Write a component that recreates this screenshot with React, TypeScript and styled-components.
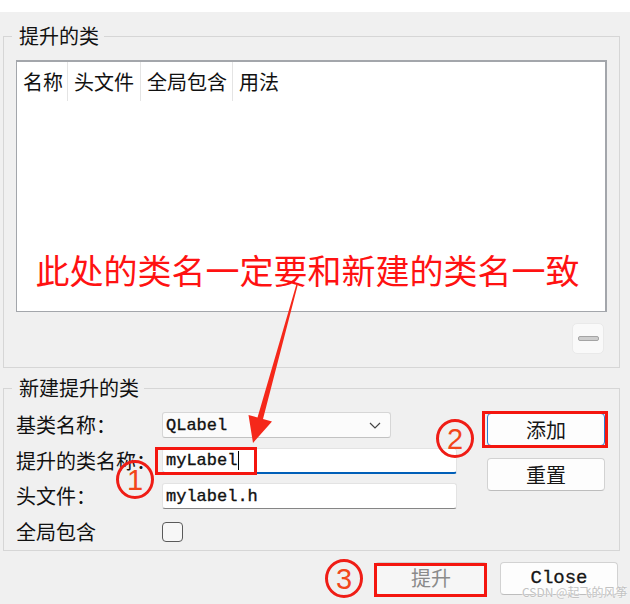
import React from 'react';
import styled, { createGlobalStyle } from 'styled-components';

const GlobalStyle = createGlobalStyle`
  html, body { margin: 0; padding: 0; background: #f0f0f0; }
  body { font-family: "Noto Sans CJK SC", "Noto Sans", sans-serif; }
`;

const Dialog = styled.div`
  position: relative;
  width: 630px;
  height: 604px;
  overflow: hidden;
  background: #f0f0f0;
  font-family: "Noto Sans CJK SC", "Noto Sans", sans-serif;
  font-size: 20px;
  color: #111;
`;

const TopStrip = styled.div`
  height: 12px;
  background: #ffffff;
`;

const Group = styled.fieldset<{ $mt: number; $pb: number }>`
  box-sizing: border-box;
  width: 617px;
  min-width: 0;
  margin: ${(p) => p.$mt}px 0 0 3px;
  padding: 14px 12px ${(p) => p.$pb}px 12px;
  border: 1px solid #d6d6d6;
`;

const GroupTitle = styled.legend`
  margin-left: -4px;
  padding: 0 5px 0 7px;
  height: 20px;
  font-size: 20px;
  line-height: 20px;
  white-space: nowrap;
`;

const ClassList = styled.div`
  box-sizing: border-box;
  height: 252px;
  border: 2px solid #a3a6ab;
  border-width: 2px 2px 1px 1px;
  background: #ffffff;
  display: flex;
  flex-direction: column;
`;

const HeaderRow = styled.div`
  display: flex;
  height: 39px;
`;

const HeaderCell = styled.div<{ $w?: number }>`
  box-sizing: border-box;
  ${(p) => (p.$w ? `width: ${p.$w}px; border-right: 1px solid #e4e4e4;` : 'flex: 1;')}
  padding-left: 6px;
  display: flex;
  align-items: center;
  line-height: 20px;
  white-space: nowrap;
`;

const ListBody = styled.div`
  flex: 1;
  display: flex;
  align-items: flex-end;
  justify-content: center;
  padding: 0 7px 21px 0;
`;

const Annotation = styled.div`
  color: #ff1212;
  font-size: 34px;
  line-height: 40px;
  white-space: nowrap;
`;

const ToolRow = styled.div`
  display: flex;
  justify-content: flex-end;
  margin-top: 11px;
  padding-right: 3px;
`;

const MinusButton = styled.div`
  box-sizing: border-box;
  width: 32px;
  height: 31px;
  border: 1px solid #e9e9e9;
  border-radius: 5px;
  background: #f9f9f9;
  display: flex;
  align-items: center;
  justify-content: center;
`;

const MinusBar = styled.span`
  box-sizing: border-box;
  width: 21px;
  height: 5px;
  border: 1px solid #a4a4a4;
  border-radius: 2px;
  background: #cdcdcd;
`;

const FormGrid = styled.div`
  display: grid;
  grid-template-columns: 146px 325px 118px;
  grid-template-rows: repeat(4, 26px);
  row-gap: 9.5px;
`;

const FieldLabel = styled.div<{ $row: number }>`
  grid-column: 1;
  grid-row: ${(p) => p.$row};
  display: flex;
  align-items: center;
  white-space: nowrap;
  line-height: 20px;
`;

const FieldCell = styled.div<{ $row: number }>`
  grid-column: 2;
  grid-row: ${(p) => p.$row};
  display: flex;
  align-items: center;
`;

const MonoText = styled.span`
  font-family: "Liberation Mono", "DejaVu Sans Mono", monospace;
  font-size: 17px;
  color: #111;
  white-space: nowrap;
  -webkit-text-stroke: 0.35px #111;
`;

const ComboBox = styled.div`
  box-sizing: border-box;
  width: 229px;
  height: 26px;
  border: 1px solid #d6d6d6;
  border-bottom-color: #c2c2c2;
  border-radius: 3px;
  background: #fbfbfb;
  display: flex;
  align-items: center;
  justify-content: space-between;
  padding: 0 9px 0 3px;
`;

const LineEdit = styled.div<{ $focused?: boolean }>`
  position: relative;
  box-sizing: border-box;
  width: 295px;
  height: 26px;
  border: 1px solid #e3e3e3;
  border-bottom: ${(p) => (p.$focused ? '2px solid #005fb8' : '1px solid #858585')};
  border-radius: 3px;
  background: #ffffff;
  display: flex;
  align-items: center;
  padding-left: 3px;
`;

const Caret = styled.span`
  display: inline-block;
  width: 1px;
  height: 19px;
  margin-left: 1px;
  background: #000;
`;

const Highlight = styled.span<{ $l: number; $t: number; $r: number; $b: number }>`
  position: absolute;
  left: ${(p) => p.$l}px;
  top: ${(p) => p.$t}px;
  right: ${(p) => p.$r}px;
  bottom: ${(p) => p.$b}px;
  box-sizing: border-box;
  border: 3px solid #f4160f;
  pointer-events: none;
`;

const CheckBox = styled.span`
  box-sizing: border-box;
  width: 21px;
  height: 20px;
  border: 1px solid #5a5a5a;
  border-radius: 4px;
  background: #f7f7f7;
`;

const ButtonColumn = styled.div`
  grid-column: 3;
  grid-row: 1 / span 4;
  display: flex;
  flex-direction: column;
  gap: 12px;
  padding-top: 1px;
`;

const PushButton = styled.button<{ $w: number; $focus?: boolean; $off?: boolean; $mono?: boolean }>`
  position: relative;
  box-sizing: border-box;
  width: ${(p) => p.$w}px;
  height: 33px;
  padding: 0;
  border: 1px solid ${(p) => (p.$focus ? '#2a7bd0' : '#d2d2d2')};
  border-bottom-color: ${(p) => (p.$focus ? '#2a7bd0' : '#bdbdbd')};
  border-radius: 4px;
  background: ${(p) => (p.$off ? '#f6f6f6' : '#fdfdfd')};
  color: ${(p) => (p.$off ? '#8a8a8a' : '#161616')};
  font-family: ${(p) =>
    p.$mono ? '"Liberation Mono", monospace' : '"Noto Sans CJK SC", "Noto Sans", sans-serif'};
  font-size: ${(p) => (p.$mono ? 19 : 20)}px;
  line-height: 20px;
  ${(p) => (p.$mono ? '-webkit-text-stroke: 0.3px #161616;' : '')}
`;

const BottomRow = styled.div`
  display: flex;
  justify-content: flex-end;
  gap: 13px;
  margin-top: 11px;
  padding-right: 12px;
`;

const CircleMark = styled.span<{ $x: number; $y: number }>`
  position: absolute;
  left: ${(p) => p.$x}px;
  top: ${(p) => p.$y}px;
  box-sizing: border-box;
  width: 38px;
  height: 39px;
  border: 3px solid #ef1d16;
  border-radius: 50%;
  display: flex;
  align-items: center;
  justify-content: center;
  font-family: "Liberation Sans", sans-serif;
  font-size: 29px;
  line-height: 30px;
  color: #f2461a;
  pointer-events: none;
`;

const ArrowLayer = styled.svg`
  position: absolute;
  left: 0;
  top: 0;
  pointer-events: none;
`;

const Watermark = styled.span`
  position: absolute;
  left: 522px;
  top: 584px;
  font-size: 12px;
  line-height: 15px;
  color: #c2c2c2;
  text-shadow: 0 0 2px #fff, 0 0 1px #fff;
  white-space: nowrap;
  pointer-events: none;
`;

export default function App() {
  return (
    <Dialog>
      <GlobalStyle />
      <TopStrip />
      <Group $mt={14} $pb={13}>
        <GroupTitle>提升的类</GroupTitle>
        <ClassList>
          <HeaderRow>
            <HeaderCell $w={51}>名称</HeaderCell>
            <HeaderCell $w={73}>头文件</HeaderCell>
            <HeaderCell $w={92}>全局包含</HeaderCell>
            <HeaderCell>用法</HeaderCell>
          </HeaderRow>
          <ListBody>
            <Annotation>此处的类名一定要和新建的类名一致</Annotation>
          </ListBody>
        </ClassList>
        <ToolRow>
          <MinusButton>
            <MinusBar />
          </MinusButton>
        </ToolRow>
      </Group>

      <Group $mt={10} $pb={5}>
        <GroupTitle>新建提升的类</GroupTitle>
        <FormGrid>
          <FieldLabel $row={1}>基类名称：</FieldLabel>
          <FieldCell $row={1}>
            <ComboBox>
              <MonoText>QLabel</MonoText>
              <svg width="12" height="7" viewBox="0 0 12 7">
                <polyline points="1,1 6,6 11,1" fill="none" stroke="#444" strokeWidth="1.2" />
              </svg>
            </ComboBox>
          </FieldCell>
          <FieldLabel $row={2}>提升的类名称：</FieldLabel>
          <FieldCell $row={2}>
            <LineEdit $focused>
              <MonoText>myLabel</MonoText>
              <Caret />
              <Highlight $l={-8} $t={-2} $r={199} $b={-3} />
            </LineEdit>
          </FieldCell>
          <FieldLabel $row={3}>头文件：</FieldLabel>
          <FieldCell $row={3}>
            <LineEdit>
              <MonoText>mylabel.h</MonoText>
            </LineEdit>
          </FieldCell>
          <FieldLabel $row={4}>全局包含</FieldLabel>
          <FieldCell $row={4}>
            <CheckBox />
          </FieldCell>
          <ButtonColumn>
            <PushButton $w={118} $focus>
              添加
              <Highlight $l={-6} $t={-3} $r={-4} $b={-3} />
            </PushButton>
            <PushButton $w={118}>重置</PushButton>
          </ButtonColumn>
        </FormGrid>
      </Group>

      <BottomRow>
        <PushButton $w={112} $off>
          提升
          <Highlight $l={-2} $t={0} $r={-1} $b={-3} />
        </PushButton>
        <PushButton $w={118} $mono>Close</PushButton>
      </BottomRow>

      <ArrowLayer width="630" height="604" viewBox="0 0 630 604">
        <polygon
          points="296.5,284 298,284 263,419 272,421.5 253,443 248.5,415 257.5,417.5"
          fill="#f5281a"
        />
      </ArrowLayer>
      <CircleMark $x={116} $y={460}>1</CircleMark>
      <CircleMark $x={436} $y={419}>2</CircleMark>
      <CircleMark $x={325} $y={559}>3</CircleMark>
      <Watermark>CSDN @起飞的风筝</Watermark>
    </Dialog>
  );
}
